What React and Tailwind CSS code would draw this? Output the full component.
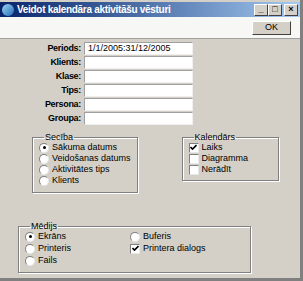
import { useState } from "react";

function Radio({ checked }) {
  return (
    <span className="w-[10px] h-[10px] rounded-full bg-white border border-[#808080] border-r-[#e8e8e8] border-b-[#e8e8e8] shrink-0 flex items-center justify-center">
      {checked && <span className="w-[3px] h-[3px] rounded-full bg-black" />}
    </span>
  );
}

function Check({ checked }) {
  return (
    <span className="w-[10px] h-[10px] bg-white border border-[#808080] border-r-[#e8e8e8] border-b-[#e8e8e8] shrink-0 flex items-center justify-center">
      {checked && (
        <svg width="7" height="7" viewBox="0 0 7 7">
          <path d="M0.5 3 L2.5 5 L6.5 1" stroke="#000" strokeWidth="1.6" fill="none" />
        </svg>
      )}
    </span>
  );
}

function Item({ kind, checked, label }) {
  return (
    <div className="h-[11px] flex items-center gap-[3px] whitespace-nowrap">
      {kind === "radio" ? <Radio checked={checked} /> : <Check checked={checked} />}
      <span>{label}</span>
    </div>
  );
}

function Group({ title, className, children }) {
  return (
    <fieldset className={"border border-[#808080] shadow-[inset_1px_1px_0_#fff,1px_1px_0_#fff] " + className}>
      <legend className="ml-[5px] px-[1px] leading-[10px]">{title}</legend>
      {children}
    </fieldset>
  );
}

const fields = [
  { label: "Periods:", value: "1/1/2005:31/12/2005" },
  { label: "Klients:", value: "" },
  { label: "Klase:", value: "" },
  { label: "Tips:", value: "" },
  { label: "Persona:", value: "" },
  { label: "Groupa:", value: "" },
];

export default function App() {
  const [vals] = useState(fields);
  return (
    <div className="w-[303px] h-[281px] overflow-hidden bg-[#d4d0c8] flex flex-col text-[9px] text-black font-['Liberation_Sans',Arial,sans-serif] border-r-[3px] border-b-[3px] border-[#808080]">
      <div className="h-[2px] bg-[#d4d0c8]" />
      {/* title bar */}
      <div className="h-[15px] flex items-center bg-gradient-to-r from-[#0a246a] to-[#a6caf0] pl-[2px] pr-[2px]">
        <span className="w-[12px] h-[12px] rounded-full bg-gradient-to-br from-[#9fd6f5] to-[#1f6bb8] shrink-0" />
        <span className="ml-[3px] text-white font-bold text-[10px] tracking-[-0.3px]">Veidot kalendāra aktivitāšu vēsturi</span>
        <div className="ml-auto flex gap-0">
          {["_", "□", "×"].map((g, i) => (
            <span key={i} className={"w-[14px] h-[12px] bg-[#d4d0c8] border border-white border-r-[#404040] border-b-[#404040] flex items-center justify-center text-[9px] font-bold leading-none " + (i === 2 ? "ml-[2px]" : "")}>{g}</span>
          ))}
        </div>
      </div>
      {/* toolbar */}
      <div className="h-[22px] bg-[#f7f7f5] border-b border-[#a0a0a0] flex items-center justify-end pr-[9px]">
        <button className="w-[39px] h-[14px] bg-[#d4d0c8] border border-white border-r-[#404040] border-b-[#404040] text-[9px] leading-none">OK</button>
      </div>
      {/* fields */}
      <div className="mt-[3px] flex flex-col gap-[1px]">
        {vals.map((f) => (
          <div key={f.label} className="h-[13px] flex items-center">
            <span className="w-[82px] text-right font-bold tracking-[-0.3px] pr-[1px]">{f.label}</span>
            <div className="ml-[2px] w-[109px] h-[13px] bg-white border border-[#a0a0a0] border-r-[#f0f0f0] border-b-[#f0f0f0] px-[3px] leading-[11px]">{f.value}</div>
          </div>
        ))}
      </div>
      {/* groups */}
      <div className="mt-[7px] flex pl-[32px] gap-[44px] items-start">
        <Group title="Secība" className="w-[97px] h-[61px] px-[6px]">
          <div className="flex flex-col">
            <Item kind="radio" checked label="Sākuma datums" />
            <Item kind="radio" label="Veidošanas datums" />
            <Item kind="radio" label="Aktivitātes tips" />
            <Item kind="radio" label="Klients" />
          </div>
        </Group>
        <Group title="Kalendārs" className="w-[97px] h-[49px] px-[6px]">
          <div className="flex flex-col">
            <Item kind="check" checked label="Laiks" />
            <Item kind="check" label="Diagramma" />
            <Item kind="check" label="Nerādīt" />
          </div>
        </Group>
      </div>
      <div className="mt-[28px] pl-[18px]">
        <Group title="Mēdijs" className="w-[233px] h-[52px] px-[6px]">
          <div className="grid grid-cols-[105px_1fr] gap-y-[1px]">
            <Item kind="radio" checked label="Ekrāns" />
            <Item kind="radio" label="Buferis" />
            <Item kind="radio" label="Printeris" />
            <Item kind="check" checked label="Printera dialogs" />
            <Item kind="radio" label="Fails" />
          </div>
        </Group>
      </div>
    </div>
  );
}
